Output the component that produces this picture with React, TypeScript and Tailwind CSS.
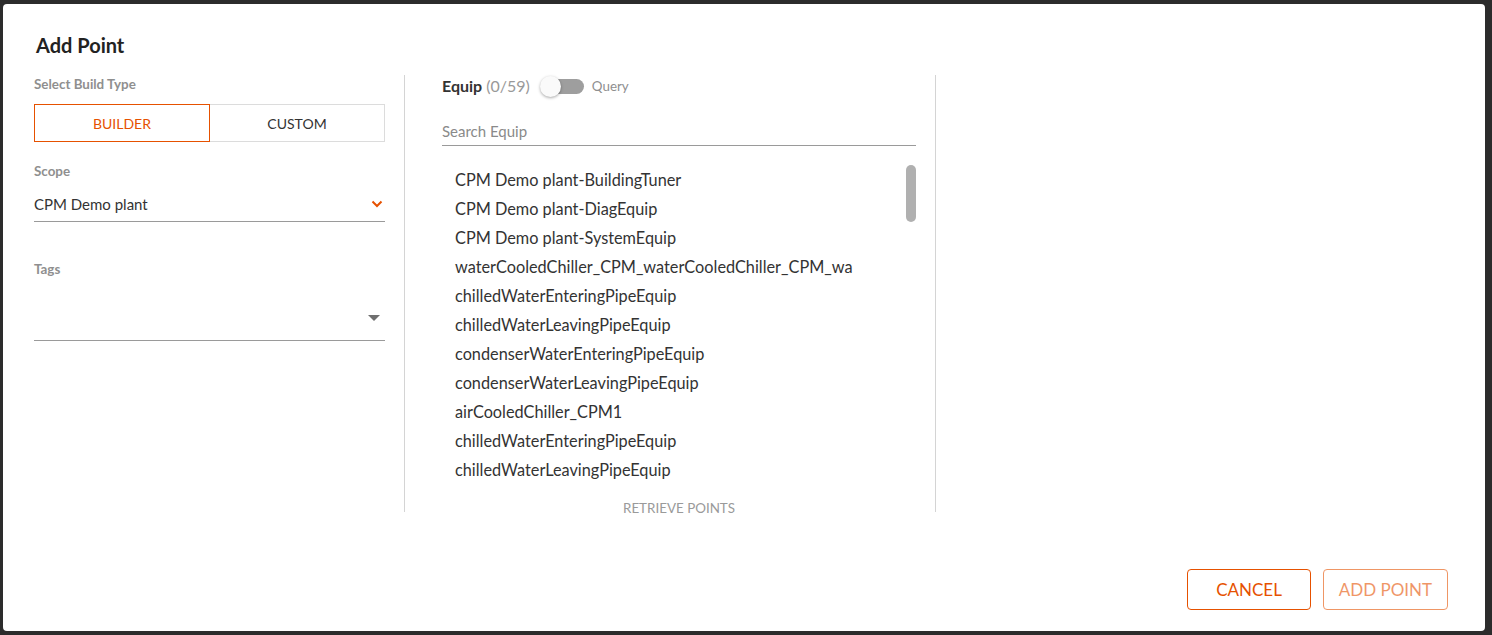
import React, { useState } from 'react';

const equips = [
  'CPM Demo plant-BuildingTuner',
  'CPM Demo plant-DiagEquip',
  'CPM Demo plant-SystemEquip',
  'waterCooledChiller_CPM_waterCooledChiller_CPM_wa',
  'chilledWaterEnteringPipeEquip',
  'chilledWaterLeavingPipeEquip',
  'condenserWaterEnteringPipeEquip',
  'condenserWaterLeavingPipeEquip',
  'airCooledChiller_CPM1',
  'chilledWaterEnteringPipeEquip',
  'chilledWaterLeavingPipeEquip',
];

export default function App() {
  const [buildType, setBuildType] = useState<'builder' | 'custom'>('builder');
  const [query, setQuery] = useState(false);

  return (
    <div className="h-[635px] w-full bg-[#2c2c2c] pt-[4px] pl-[3px] pr-[7px] pb-[4px] font-['Lato','Noto_Sans',sans-serif]">
      <div className="flex h-full flex-col rounded-[4px] bg-white">
        <h1 className="pl-[33px] pt-[29px] text-[20px] font-bold leading-[24px] text-[#222]">Add Point</h1>

        <div className="mt-[18px] flex h-[437px] pl-[31px]">
          {/* build options */}
          <div className="w-[371px] border-r border-[#d4d4d4] pr-[19px]">
            <div className="text-[13.4px] font-bold leading-[18px] text-[#8f8f8f]">Select Build Type</div>
            <div className="mt-[11px] flex h-[38px]">
              <button
                onClick={() => setBuildType('builder')}
                className={
                  buildType === 'builder'
                    ? 'flex-1 border border-[#e65100] text-[14px] text-[#e65100]'
                    : 'flex-1 border border-[#dcdcdc] text-[14px] text-[#333]'
                }
              >
                BUILDER
              </button>
              <button
                onClick={() => setBuildType('custom')}
                className={
                  buildType === 'custom'
                    ? 'flex-1 border border-[#e65100] text-[14px] text-[#e65100]'
                    : 'flex-1 border border-l-0 border-[#dcdcdc] text-[14px] text-[#333]'
                }
              >
                CUSTOM
              </button>
            </div>

            <div className="mt-[20px] text-[13.4px] font-bold leading-[18px] text-[#8f8f8f]">Scope</div>
            <div className="mt-[14px] flex items-center justify-between border-b border-[#9a9a9a] pb-[7px]">
              <span className="text-[15px] leading-[20px] text-[#333]">CPM Demo plant</span>
              <svg width="12" height="8" viewBox="0 0 12 8" className="mr-[2px]">
                <path d="M1.5 1.5 L6 6 L10.5 1.5" fill="none" stroke="#e65100" strokeWidth="2" />
              </svg>
            </div>

            <div className="mt-[38px] text-[13.4px] font-bold leading-[18px] text-[#8f8f8f]">Tags</div>
            <div className="mt-[16px] flex h-[47px] items-center justify-end border-b border-[#9a9a9a] pr-[5px]">
              <svg width="12" height="6" viewBox="0 0 12 6" className="mt-[2px]">
                <path d="M0 0 L12 0 L6 6 Z" fill="#6f6f6f" />
              </svg>
            </div>
          </div>

          {/* equip list */}
          <div className="flex w-[531px] flex-col border-r border-[#d4d4d4] pl-[37px] pr-[19px]">
            <div className="flex h-[22px] shrink-0 items-center">
              <span className="text-[16px] font-bold text-[#333]">Equip</span>
              <span className="ml-[4px] text-[16px] text-[#999]">(0/59)</span>
              <button onClick={() => setQuery(!query)} className="relative ml-[10px] flex h-[22px] w-[46px] items-center">
                <span className="ml-[10px] h-[15px] w-[34px] rounded-full bg-[#9e9e9e]" />
                <span className="absolute left-0 top-[1px] h-[21px] w-[21px] rounded-full bg-[#fafafa] shadow-[0_1px_3px_rgba(0,0,0,0.35)]" />
              </button>
              <span className="ml-[6px] text-[13.4px] text-[#8f8f8f]">Query</span>
            </div>

            <div className="mt-[24px] shrink-0 border-b border-[#9a9a9a] pb-[4px] text-[15px] leading-[20px] text-[#8a8a8a]">
              Search Equip
            </div>

            <div className="relative mt-[19px] h-[321px] shrink-0 overflow-hidden">
              <ul className="pl-[13px]">
                {equips.map((e, i) => (
                  <li key={i} className="h-[29px] text-[16.3px] leading-[29px] text-[#333]">
                    {e}
                  </li>
                ))}
              </ul>
              <div className="absolute right-0 top-0 h-[57px] w-[10px] rounded-full bg-[#b0b0b0]" />
            </div>

            <div className="mt-[13px] shrink-0 text-center text-[13.4px] leading-[18px] text-[#9a9a9a]">RETRIEVE POINTS</div>
          </div>

          <div className="flex-1" />
        </div>

        <div className="flex flex-1 items-end justify-end gap-[12px] pb-[21px] pr-[37px]">
          <button className="h-[41px] w-[124px] rounded-[4px] border border-[#e65100] text-[17px] text-[#e65100]">
            CANCEL
          </button>
          <button className="h-[41px] w-[125px] rounded-[4px] border border-[#e65100] text-[17px] text-[#e65100] opacity-60">
            ADD POINT
          </button>
        </div>
      </div>
    </div>
  );
}
